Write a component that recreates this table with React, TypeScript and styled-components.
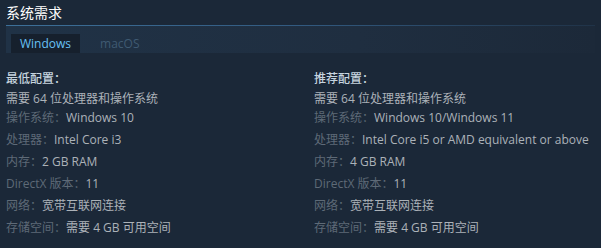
import styled, { createGlobalStyle } from "styled-components";

const GlobalStyle = createGlobalStyle`
  body {
    margin: 0;
    background: #1b2838;
    font-family: "Open Sans", "Noto Sans CJK SC", sans-serif;
  }
`;

type Spec = { label: string; value: string };

type Column = {
  heading: string;
  note: string;
  specs: Spec[];
};

const columns: Column[] = [
  {
    heading: "最低配置：",
    note: "需要 64 位处理器和操作系统",
    specs: [
      { label: "操作系统：", value: "Windows 10" },
      { label: "处理器：", value: "Intel Core i3" },
      { label: "内存：", value: "2 GB RAM" },
      { label: "DirectX 版本：", value: "11" },
      { label: "网络：", value: "宽带互联网连接" },
      { label: "存储空间：", value: "需要 4 GB 可用空间" },
    ],
  },
  {
    heading: "推荐配置：",
    note: "需要 64 位处理器和操作系统",
    specs: [
      { label: "操作系统：", value: "Windows 10/Windows 11" },
      { label: "处理器：", value: "Intel Core i5 or AMD equivalent or above" },
      { label: "内存：", value: "4 GB RAM" },
      { label: "DirectX 版本：", value: "11" },
      { label: "网络：", value: "宽带互联网连接" },
      { label: "存储空间：", value: "需要 4 GB 可用空间" },
    ],
  },
];

const Section = styled.section`
  padding: 0 6px;
  width: 601px;
  box-sizing: border-box;
`;

const Title = styled.h2`
  margin: 0;
  padding: 4px 0 3px;
  font-size: 14px;
  line-height: 18px;
  font-weight: normal;
  color: #ffffff;
`;

const Rule = styled.div`
  height: 1px;
  background: linear-gradient(
    to right,
    #3d7099 0%,
    #325a80 50%,
    rgba(47, 84, 120, 0.25) 100%
  );
`;

const TabBar = styled.div`
  display: flex;
  align-items: flex-end;
  height: 27px;
  padding-left: 5px;
  background: linear-gradient(to right, #203246 0%, #1f2e40 60%, #1c2939 100%);
`;

const Tab = styled.div<{ active?: boolean }>`
  height: 19px;
  line-height: 19px;
  padding: 0 9px;
  margin-right: 11px;
  font-size: 12px;
  color: ${(p) => (p.active ? "#67c1f5" : "#3f5a72")};
  background: ${(p) => (p.active ? "#16202d" : "transparent")};
`;

const Columns = styled.div`
  display: grid;
  grid-template-columns: 308px 1fr;
  margin-top: 17px;
`;

const Heading = styled.div`
  font-size: 12px;
  line-height: 18px;
  color: #c6d4df;
  font-weight: 500;
  margin-bottom: 2px;
`;

const Note = styled.div`
  font-size: 12px;
  line-height: 18px;
  color: #acb2b8;
  margin-bottom: 1px;
`;

const SpecList = styled.ul`
  list-style: none;
  margin: 0;
  padding: 0;
`;

const SpecRow = styled.li`
  font-size: 12px;
  line-height: 18px;
  margin-bottom: 4px;
  color: #acb2b8;
  white-space: nowrap;
`;

const Label = styled.span`
  color: #5e6a77;
`;

export default function App() {
  return (
    <>
      <GlobalStyle />
      <Section>
        <Title>系统需求</Title>
        <Rule />
        <TabBar>
          <Tab active>Windows</Tab>
          <Tab>macOS</Tab>
        </TabBar>
        <Columns>
          {columns.map((col) => (
            <div key={col.heading}>
              <Heading>{col.heading}</Heading>
              <Note>{col.note}</Note>
              <SpecList>
                {col.specs.map((s) => (
                  <SpecRow key={s.label}>
                    <Label>{s.label}</Label>
                    {s.value}
                  </SpecRow>
                ))}
              </SpecList>
            </div>
          ))}
        </Columns>
      </Section>
    </>
  );
}
